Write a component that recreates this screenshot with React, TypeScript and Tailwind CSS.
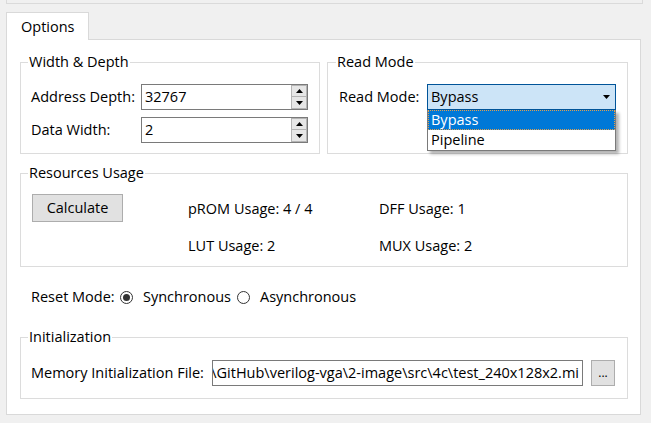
import React from "react";

function Spin({ value }: { value: string }) {
  return (
    <div className="w-[167px] h-[26px] border border-[#7a7a7a] bg-white flex">
      <div className="flex-1 pl-[3px] flex items-center">{value}</div>
      <div className="w-[16px] h-[24px] flex flex-col">
        <div className="h-[12px] border border-[#b4b4b4] bg-[#e6e6e6] flex items-center justify-center">
          <svg width="7" height="4" viewBox="0 0 7 4">
            <path d="M0 4 L3.5 0 L7 4 Z" fill="#000" />
          </svg>
        </div>
        <div className="h-[12px] border border-t-0 border-[#b4b4b4] bg-[#e6e6e6] flex items-center justify-center">
          <svg width="7" height="4" viewBox="0 0 7 4">
            <path d="M0 0 L7 0 L3.5 4 Z" fill="#000" />
          </svg>
        </div>
      </div>
    </div>
  );
}

function Radio({ checked }: { checked?: boolean }) {
  return (
    <div className="w-[13px] h-[13px] rounded-full border border-[#333333] bg-white flex items-center justify-center shrink-0">
      {checked && <div className="w-[7px] h-[7px] rounded-full bg-[#333333]" />}
    </div>
  );
}

export default function App() {
  return (
    <div className="w-[651px] h-[423px] bg-[#f0f0f0] overflow-hidden font-['Open_Sans',sans-serif] text-[14.5px] leading-[20px] text-black">
      <div className="ml-[6px] w-[637px] h-[4px] border-x border-b border-[#dadada]" />
      <div className="mt-[8px] ml-[6px] w-[83px] h-[28px] border-x border-t border-[#d9d9d9] bg-white relative z-10 flex items-center pl-[14px]">
        Options
      </div>
      <div className="-mt-px ml-[6px] w-[635px] h-[376px] border border-[#d9d9d9] bg-white pl-[13px] pt-[22px]">
        <div className="flex gap-[7px]">
          {/* Width & Depth */}
          <div className="w-[300px] border border-[#dcdcdc]">
            <div className="-mt-[11px] ml-[7px] w-fit px-[1px] bg-white">Width &amp; Depth</div>
            <div className="mt-[12px] pb-[10px] flex flex-col gap-[7px]">
              <div className="flex items-center">
                <div className="w-[120px] pl-[10px]">Address Depth:</div>
                <Spin value="32767" />
              </div>
              <div className="flex items-center">
                <div className="w-[120px] pl-[10px]">Data Width:</div>
                <Spin value="2" />
              </div>
            </div>
          </div>
          {/* Read Mode */}
          <div className="w-[301px] border border-[#dcdcdc]">
            <div className="-mt-[11px] ml-[8px] w-fit px-[1px] bg-white">Read Mode</div>
            <div className="mt-[12px] flex items-center">
              <div className="w-[99px] pl-[11px]">Read Mode:</div>
              <div className="relative w-[189px] h-[26px] border border-[#005499] bg-[#cce4f7] flex items-center justify-between pl-[3px] pr-[5px]">
                <span>Bypass</span>
                <svg width="7" height="4" viewBox="0 0 7 4">
                  <path d="M0 0 L7 0 L3.5 4 Z" fill="#000" />
                </svg>
                <div className="absolute left-[-1px] top-[25px] w-[189px] border-x border-b border-[#7a7a7a] bg-white shadow-[3px_3px_3px_rgba(0,0,0,0.3)] z-20">
                  <div className="h-[20px] bg-[#0078d7] text-white border border-dotted border-[#e0a050] pl-[2px] flex items-center">
                    Bypass
                  </div>
                  <div className="h-[20px] pl-[3px] flex items-center">Pipeline</div>
                </div>
              </div>
            </div>
          </div>
        </div>

        {/* Resources Usage */}
        <div className="mt-[19px] w-[608px] border border-[#dcdcdc]">
          <div className="-mt-[11px] ml-[7px] w-fit px-[1px] bg-white">Resources Usage</div>
          <div className="flex items-start pl-[11px] pb-[10px]">
            <div className="mt-[11px] w-[91px] h-[28px] bg-[#e1e1e1] border border-[#adadad] flex items-center justify-center">
              Calculate
            </div>
            <div className="ml-[65px] mt-[16px] grid grid-cols-[191px_auto] gap-y-[17px]">
              <div>pROM Usage: 4 / 4</div>
              <div>DFF Usage: 1</div>
              <div>LUT Usage: 2</div>
              <div>MUX Usage: 2</div>
            </div>
          </div>
        </div>

        {/* Reset Mode */}
        <div className="mt-[20px] h-[20px] flex items-center">
          <div className="w-[100px] pl-[11px]">Reset Mode:</div>
          <div className="w-[117px] flex items-center gap-[10px]">
            <Radio checked />
            <span>Synchronous</span>
          </div>
          <div className="flex items-center gap-[10px]">
            <Radio />
            <span>Asynchronous</span>
          </div>
        </div>

        {/* Initialization */}
        <div className="mt-[30px] w-[608px] border border-[#dcdcdc]">
          <div className="-mt-[11px] ml-[7px] w-fit px-[1px] bg-white">Initialization</div>
          <div className="mt-[13px] pb-[12px] flex items-center">
            <div className="w-[191px] pl-[10px] whitespace-nowrap">Memory Initialization File:</div>
            <div className="w-[371px] h-[26px] border border-[#7a7a7a] bg-white overflow-hidden flex items-center justify-end pr-[3px] whitespace-nowrap">
              <span className="shrink-0">\GitHub\verilog-vga\2-image\src\4c\test_240x128x2.mi</span>
            </div>
            <div className="ml-[8px] w-[24px] h-[26px] bg-[#e1e1e1] border border-[#adadad] flex items-center justify-center text-[12px]">
              ...
            </div>
          </div>
        </div>
      </div>
    </div>
  );
}
